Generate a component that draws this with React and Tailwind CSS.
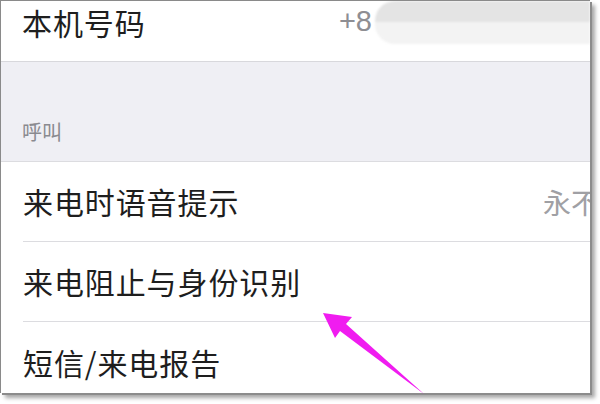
import React from 'react';

const cjk = { fontFamily: '"Noto Sans CJK SC", "Noto Sans", sans-serif' };

function Row({ label, value, last }) {
  return (
    <div className="flex h-[80px] items-center pl-[22px]">
      <div className={`flex h-full flex-1 items-center justify-between ${last ? '' : 'border-b border-[#dcdce0]'}`}>
        <span className="text-[30px] tracking-[0.9px] text-[#1e1e1e] whitespace-nowrap">{label}</span>
        {value && <span className="text-[28px] text-[#a0a0a4] whitespace-nowrap -mr-[9px]">{value}</span>}
      </div>
    </div>
  );
}

export default function App() {
  return (
    <div className="relative h-[404px] w-[600px] overflow-hidden bg-white" style={cjk}>
      <div className="h-[393px] w-[590px] overflow-hidden border-l border-t border-[#8a8a8a] bg-white shadow-[2px_2px_0_#8c8c8c,5px_5px_4px_rgba(0,0,0,0.35)]">
        {/* 本机号码 */}
        <div className="flex h-[61px] items-center justify-between border-b border-[#d8d8dc] pb-[18px] pl-[21px]">
          <span className="text-[30px] tracking-[0.9px] text-[#1e1e1e]">本机号码</span>
          <div className="flex items-center">
            <span className="text-[29px] text-[#8e8e93]" style={{ fontFamily: '"Liberation Sans", sans-serif' }}>+8</span>
            <div className="ml-[3px] flex h-[43px] w-[215px] flex-col overflow-hidden rounded-l-[20px] blur-[1px]">
              <div className="h-[21px] bg-[#e4e4e4]" />
              <div className="h-[22px] bg-[#f3f3f3]" />
            </div>
          </div>
        </div>

        {/* 呼叫 header */}
        <div className="flex h-[100px] items-end border-b border-[#dcdce0] bg-[#efeff4] pb-[14px] pl-[21px]">
          <span className="text-[20px] text-[#8a8a8f]">呼叫</span>
        </div>

        <Row label="来电时语音提示" value="永不" />
        <Row label="来电阻止与身份识别" />
        <Row label="短信/来电报告" last />
      </div>

      {/* pink arrow */}
      <svg className="absolute left-0 top-0" width="600" height="404" viewBox="0 0 600 404">
        <polygon
          points="323,313 352,317 346,324 424,394 340,331 335,338"
          fill="#f01cf0"
        />
      </svg>
    </div>
  );
}
